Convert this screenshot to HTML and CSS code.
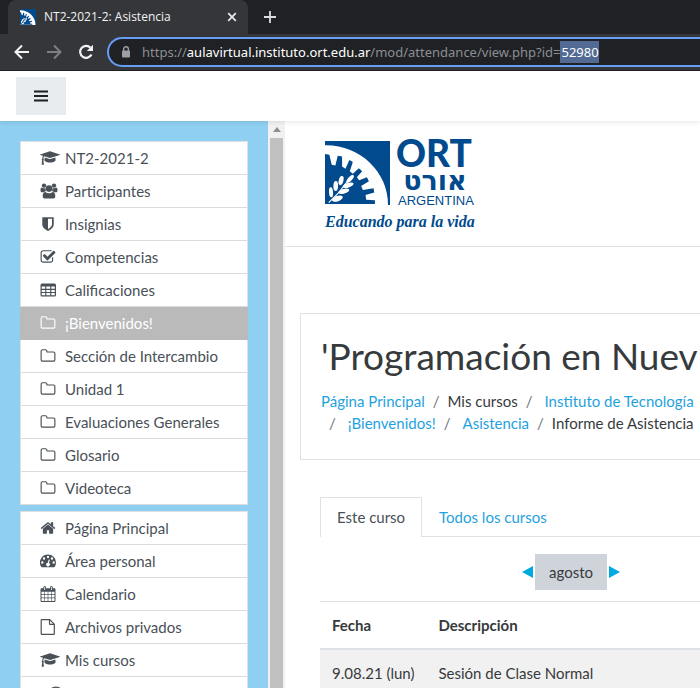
FILE: index.html
```html
<!DOCTYPE html>
<html lang="es">
<head>
<meta charset="utf-8">
<title>NT2-2021-2: Asistencia</title>
<link rel="stylesheet" href="styles.css">
</head>
<body>
<svg class="defs" aria-hidden="true">
  <symbol id="i-cap" viewBox="0 0 2304 1792"><path d="M1774 836l18 316q4 69-82 128t-235 93.500-323 34.500-323-34.500-235-93.500-82-128l18-316 574 181q22 7 48 7t48-7zm530-324q0 23-22 31l-1120 352q-4 1-10 1t-10-1l-652-206q-43 34-71 111.500t-34 178.500q63 36 63 109 0 69-58 107l58 433q2 14-8 25-9 11-24 11h-192q-15 0-24-11-10-11-8-25l58-433q-58-38-58-107 0-73 65-111 11-207 98-330l-333-104q-22-8-22-31t22-31l1120-352q4-1 10-1t10 1l1120 352q22 8 22 31z"/></symbol>
  <symbol id="i-users" viewBox="0 0 18 16"><circle cx="4" cy="2.600" r="2.200"/><circle cx="14" cy="2.600" r="2.200"/><path d="M.5 7.500C.5 5.300 1 4.600 1.700 4.600 2.500 5.400 4.600 5.600 5.400 5.100 5.300 6.500 5.700 7.500 6.400 8.300 5.200 8.300 4.400 8.700 3.900 9.300H2C1 9.300.5 8.500.5 7.500ZM17.500 7.500C17.500 5.300 17 4.600 16.300 4.600 15.500 5.400 13.400 5.600 12.600 5.100 12.700 6.500 12.300 7.500 11.600 8.300 12.800 8.300 13.600 8.700 14.100 9.300H16C17 9.300 17.500 8.500 17.500 7.500Z"/><circle cx="9" cy="5.600" r="3.300"/><path d="M2.700 13.200C2.700 10.700 3.400 8.900 5.400 8.900 6.300 9.700 7.600 10.200 9 10.200S11.700 9.700 12.600 8.900C14.600 8.900 15.300 10.700 15.300 13.200 15.300 14.800 14.300 15.600 12.900 15.600H5.100C3.700 15.600 2.700 14.800 2.700 13.200Z"/></symbol>
  <symbol id="i-shield" viewBox="0 0 1792 1792"><path d="M1344 960v-640h-448v1137q119-63 213-137 235-184 235-360zm192-768v768q0 86-33.500 170.500t-83 150-118 127.500-126.500 103-121 77.500-89.500 49.500-42.500 20q-12 6-26 6t-26-6q-16-7-42.500-20t-89.500-49.500-121-77.500-126.500-103-118-127.500-83-150-33.500-170.500v-768q0-26 19-45t45-19h1152q26 0 45 19t19 45z"/></symbol>
  <symbol id="i-check" viewBox="0 0 1792 1792"><path d="M1472 930v318q0 119-84.500 203.500t-203.500 84.500h-832q-119 0-203.500-84.500t-84.500-203.500v-832q0-119 84.500-203.500t203.500-84.500h832q63 0 117 25 15 7 18 23 3 17-9 29l-49 49q-10 10-23 10-3 0-9-2-23-6-45-6h-832q-66 0-113 47t-47 113v832q0 66 47 113t113 47h832q66 0 113-47t47-113v-254q0-13 9-22l64-64q10-10 23-10 6 0 12 3 20 8 20 29zm231-489l-814 814q-24 24-57 24t-57-24l-430-430q-24-24-24-57t24-57l110-110q24-24 57-24t57 24l263 263 647-647q24-24 57-24t57 24l110 110q24 24 24 57t-24 57z"/></symbol>
  <symbol id="i-table" viewBox="0 0 16 16"><path fill-rule="evenodd" d="M2 1.500H14.500Q16 1.500 16 3V13Q16 14.500 14.500 14.500H2Q.5 14.500.5 13V3Q.5 1.500 2 1.500ZM1.700 4.500V6.800H5.200V4.500ZM6.300 4.500V6.800H10.200V4.500ZM11.300 4.500V6.800H14.800V4.500ZM1.700 7.900V10H5.200V7.900ZM6.300 7.900V10H10.200V7.900ZM11.300 7.900V10H14.800V7.900ZM1.700 11.100V13.300H5.200V11.100ZM6.300 11.100V13.300H10.200V11.100ZM11.300 11.100V13.300H14.800V11.100Z"/></symbol>
  <symbol id="i-folder" viewBox="0 0 1792 1792"><path d="M1600 1312v-704q0-40-28-68t-68-28h-704q-40 0-68-28t-28-68v-64q0-40-28-68t-68-28h-320q-40 0-68 28t-28 68v960q0 40 28 68t68 28h1216q40 0 68-28t28-68zm128-704v704q0 92-66 158t-158 66h-1216q-92 0-158-66t-66-158v-960q0-92 66-158t158-66h320q92 0 158 66t66 158v32h672q92 0 158 66t66 158z"/></symbol>
  <symbol id="i-home" viewBox="0 0 1792 1792"><path d="M1472 992v480q0 26-19 45t-45 19h-384v-384h-256v384h-384q-26 0-45-19t-19-45v-480q0-1 .5-3t.5-3l575-474 575 474q1 2 1 6zm223-69l-62 74q-8 9-21 11h-3q-13 0-21-7l-692-577-692 577q-12 8-24 7-13-2-21-11l-62-74q-8-10-7-23.500t11-21.500l719-599q32-26 76-26t76 26l244 204v-195q0-14 9-23t23-9h192q14 0 23 9t9 23v408l219 182q10 8 11 21.500t-7 23.500z"/></symbol>
  <symbol id="i-gauge" viewBox="0 0 16 16"><path fill-rule="evenodd" d="M8 1.500A8 8 0 0 1 16 9.500C16 11 15.600 12.500 14.800 13.800Q14.600 14.200 14.100 14.200H1.900Q1.400 14.200 1.200 13.800A8 8 0 0 1 8 1.500ZM2.300 8.300a1.200 1.200 0 1 0 0 2.400 1.200 1.200 0 0 0 0-2.400ZM4 4.300a1.200 1.200 0 1 0 0 2.400 1.200 1.200 0 0 0 0-2.400ZM8 2.700a1.200 1.200 0 1 0 0 2.400 1.200 1.200 0 0 0 0-2.400ZM12 4.300a1.200 1.200 0 1 0 0 2.400 1.200 1.200 0 0 0 0-2.400ZM13.700 8.300a1.200 1.200 0 1 0 0 2.400 1.200 1.200 0 0 0 0-2.400ZM8.700 6.400 7.800 9.700A1.800 1.800 0 1 0 9 10l.9-3.300Z"/></symbol>
  <symbol id="i-calendar" viewBox="0 0 16 16"><path fill-rule="evenodd" d="M3.300 2.300V1.500Q3.300 0 4.700 0T6.100 1.500V2.300H10V1.500Q10 0 11.400 0T12.800 1.500V2.300H14.300Q15.500 2.300 15.500 3.500V14.800Q15.500 16 14.300 16H1.700Q.5 16 .5 14.800V3.500Q.5 2.300 1.700 2.300ZM4.300 1V4H5.100V1ZM11 1V4H11.800V1ZM1.500 5.700V8.300H4.300V5.700ZM4.900 5.700V8.300H7.700V5.700ZM8.300 5.700V8.300H11.100V5.700ZM11.700 5.700V8.300H14.500V5.700ZM1.500 8.900V11.600H4.300V8.900ZM4.900 8.900V11.600H7.700V8.900ZM8.300 8.900V11.600H11.100V8.900ZM11.700 8.900V11.600H14.500V8.900ZM1.500 12.200V15H4.300V12.200ZM4.900 12.200V15H7.700V12.200ZM8.300 12.200V15H11.100V12.200ZM11.700 12.200V15H14.500V12.200Z"/></symbol>
  <symbol id="i-file" viewBox="0 0 16 16"><path d="M1.200 1.300Q1.200.6 1.900.6H9.700L14.300 5.200V14.700Q14.300 15.400 13.600 15.400H1.900Q1.200 15.400 1.200 14.700ZM9.500.8V4.700Q9.500 5.400 10.200 5.400H14.200" fill="none" stroke="currentColor" stroke-width="1.200"/></symbol>
  <symbol id="i-emblem" viewBox="9 9 194 191">
    <path fill="#004a8d" d="M9 9H203V200H9Z"/>
    <path fill="#fff" d="M9 22C112 20 197 100 197 200H9Z"/>
    <path fill="#004a8d" d="M9 197V48L22 50 29 80 40 82 47 53 60 55 60 85 70 92 82 66 92 72 83 99 92 107 110 90 120 99 104 117 111 126 134 117 140 129 117 143 122 155 154 150 156 163 130 170 132 184 158 186V197Z"/>
    <g fill="#fff"><ellipse cx="84" cy="122" rx="6" ry="15" transform="rotate(42 84 122)"/><ellipse cx="57" cy="127" rx="7" ry="14" transform="rotate(14 57 127)"/><ellipse cx="41" cy="143" rx="7" ry="15" transform="rotate(2 41 143)"/><ellipse cx="27" cy="162" rx="6" ry="15" transform="rotate(-4 27 162)"/><ellipse cx="78" cy="141" rx="7" ry="17" transform="rotate(72 78 141)"/><ellipse cx="65" cy="159" rx="7" ry="17" transform="rotate(74 65 159)"/><ellipse cx="46" cy="181" rx="8" ry="17" transform="rotate(70 46 181)"/></g>
    <path d="M20 193 50 163 78 126" fill="none" stroke="#fff" stroke-width="3"/>
  </symbol>
</svg>

<header class="browser">
  <div class="tabstrip">
    <div class="tab">
      <svg class="favicon"><use href="#i-emblem"/></svg>
      <span class="tab-title">NT2-2021-2: Asistencia</span>
      <button class="chrome-btn close" aria-label="Cerrar pestaña"><svg width="10" height="10" viewBox="0 0 10 10"><path d="M1.200 1.200 8.800 8.800M8.800 1.200 1.200 8.800" stroke="#e8eaed" stroke-width="1.700"/></svg></button>
    </div>
    <button class="chrome-btn new-tab" aria-label="Nueva pestaña"><svg width="12" height="12" viewBox="0 0 12 12"><path d="M6 0V12M0 6H12" stroke="#dadce0" stroke-width="1.800"/></svg></button>
  </div>
  <div class="toolbar">
    <button class="chrome-btn" aria-label="Atrás"><svg width="16" height="16" viewBox="0 0 16 16"><path d="M15 8H2M8 1.500 1.500 8 8 14.500" fill="none" stroke="#f1f3f4" stroke-width="2"/></svg></button>
    <button class="chrome-btn" aria-label="Adelante"><svg width="16" height="16" viewBox="0 0 16 16"><path d="M1 8H14M8 1.500 14.500 8 8 14.500" fill="none" stroke="#7d7f82" stroke-width="2"/></svg></button>
    <button class="chrome-btn" aria-label="Recargar"><svg width="16" height="16" viewBox="0 0 16 16"><path d="M13.500 10.500A6 6 0 1 1 12.500 3.700" fill="none" stroke="#f1f3f4" stroke-width="2.200"/><path d="M15 .8V7H8.800Z" fill="#f1f3f4"/></svg></button>
    <div class="omnibox">
      <svg class="lock" width="10" height="12" viewBox="0 0 10 12"><path d="M2.600 5V3.200A2.400 2.400 0 0 1 7.400 3.200V5" fill="none" stroke="#9aa0a6" stroke-width="1.400"/><rect x="1" y="4.400" width="8" height="7.200" rx="1" fill="#9aa0a6"/></svg>
      <div class="url" role="textbox" tabindex="0" aria-label="Dirección">https://<b>aulavirtual.instituto.ort.edu.ar</b>/mod/attendance/view.php?id=<mark>52980</mark></div>
    </div>
  </div>
</header>

<div class="navbar">
  <button class="menu-btn" aria-label="Panel lateral"><svg width="14" height="12" viewBox="0 0 14 12"><path d="M0 1.500H14M0 6H14M0 10.500H14" stroke="#1d2125" stroke-width="2"/></svg></button>
</div>

<div class="layout">
  <nav class="drawer" aria-label="Navegación">
    <ul class="nav-list">
      <li><a href="#"><svg class="icon wide"><use href="#i-cap"/></svg>NT2-2021-2</a></li>
      <li><a href="#"><svg class="icon people"><use href="#i-users"/></svg>Participantes</a></li>
      <li><a href="#"><svg class="icon"><use href="#i-shield"/></svg>Insignias</a></li>
      <li><a href="#"><svg class="icon"><use href="#i-check"/></svg>Competencias</a></li>
      <li><a href="#"><svg class="icon"><use href="#i-table"/></svg>Calificaciones</a></li>
      <li><a href="#" class="active"><svg class="icon"><use href="#i-folder"/></svg>¡Bienvenidos!</a></li>
      <li><a href="#"><svg class="icon"><use href="#i-folder"/></svg>Sección de Intercambio</a></li>
      <li><a href="#"><svg class="icon"><use href="#i-folder"/></svg>Unidad 1</a></li>
      <li><a href="#"><svg class="icon"><use href="#i-folder"/></svg>Evaluaciones Generales</a></li>
      <li><a href="#"><svg class="icon"><use href="#i-folder"/></svg>Glosario</a></li>
      <li><a href="#"><svg class="icon"><use href="#i-folder"/></svg>Videoteca</a></li>
    </ul>
    <ul class="nav-list">
      <li><a href="#"><svg class="icon"><use href="#i-home"/></svg>Página Principal</a></li>
      <li><a href="#"><svg class="icon"><use href="#i-gauge"/></svg>Área personal</a></li>
      <li><a href="#"><svg class="icon"><use href="#i-calendar"/></svg>Calendario</a></li>
      <li><a href="#"><svg class="icon"><use href="#i-file"/></svg>Archivos privados</a></li>
      <li><a href="#"><svg class="icon wide"><use href="#i-cap"/></svg>Mis cursos</a></li>
      <li><a href="#" class="sub" aria-label="Curso"><svg class="icon"><use href="#i-gauge"/></svg></a></li>
    </ul>
  </nav>
  <div class="scrollbar"><svg width="8" height="5" viewBox="0 0 8 5"><path d="M0 5 4 0 8 5Z" fill="#8f8f8f"/></svg><div class="thumb"></div></div>

  <main class="content">
    <div class="brand">
      <svg class="logo" width="152" height="96" viewBox="0 0 152 96" role="img" aria-label="ORT Argentina">
        <use href="#i-emblem" x="2" y="3" width="65" height="64"/>
        <g fill="#004a8d">
          <text class="logo-ort" x="73" y="29">ORT</text>
          <text class="logo-hebrew" x="112" y="52" text-anchor="middle">אורט</text>
          <text class="logo-country" x="75" y="67">ARGENTINA</text>
          <text class="logo-motto" x="2" y="89">Educando para la vida</text>
        </g>
      </svg>
    </div>

    <section class="page-card">
      <h1>'Programación en Nuev</h1>
      <ol class="crumbs">
        <li><a href="#">Página Principal</a></li>
        <li>Mis cursos</li>
        <li class="gap"><a href="#">Instituto de Tecnología</a></li>
        <li class="break" aria-hidden="true"></li>
        <li class="gap"><a href="#">¡Bienvenidos!</a></li>
        <li class="gap"><a href="#">Asistencia</a></li>
        <li>Informe de Asistencia</li>
      </ol>
    </section>

    <section class="report">
      <div class="tabs">
        <a class="tab-link current" href="#">Este curso</a>
        <a class="tab-link" href="#">Todos los cursos</a>
      </div>
      <div class="month">
        <button class="arrow" aria-label="Mes anterior"><svg width="11" height="12" viewBox="0 0 11 12"><path d="M0 6 11 0V12Z" fill="#00a9e0"/></svg></button>
        <span class="month-name">agosto</span>
        <button class="arrow" aria-label="Mes siguiente"><svg width="11" height="12" viewBox="0 0 11 12"><path d="M11 6 0 0V12Z" fill="#00a9e0"/></svg></button>
      </div>
      <table class="sessions">
        <thead><tr><th class="date">Fecha</th><th>Descripción</th></tr></thead>
        <tbody><tr><td>9.08.21 (lun)</td><td>Sesión de Clase Normal</td></tr></tbody>
      </table>
    </section>
  </main>
</div>
</body>
</html>
```
FILE: styles.css
```css
* { box-sizing: border-box; }

body {
  margin: 0;
  height: 100vh;
  overflow: hidden;
  display: flex;
  flex-direction: column;
  background: #fff;
  color: #373a3c;
  font: 15px/22px Lato, sans-serif;
}

a { color: #1fa2de; text-decoration: none; }
button { border: 0; padding: 0; background: none; display: flex; align-items: center; justify-content: center; }
ul, ol { list-style: none; margin: 0; padding: 0; }
.defs { position: absolute; width: 0; height: 0; }

/* Browser frame */
.browser { flex: none; background: #35363a; border-bottom: 1px solid #202124; font-family: "Noto Sans", "Open Sans", sans-serif; }
.tabstrip { display: flex; height: 34px; padding-left: 8px; background: #202124; }
.tab {
  display: flex;
  align-items: center;
  width: 240px;
  padding: 0 10px 0 12px;
  background: #35363a;
  border-radius: 8px 8px 0 0;
}
.favicon { width: 16px; height: 16px; margin-right: 8px; }
.tab-title { flex: 1; color: #f1f3f4; font-family: "Open Sans", sans-serif; font-size: 12px; white-space: nowrap; }
.close { width: 12px; height: 16px; }
.new-tab { width: 44px; height: 34px; }
.toolbar { display: flex; align-items: center; height: 36px; padding-left: 14px; gap: 16px; }
.omnibox {
  flex: 1;
  display: flex;
  align-items: center;
  height: 30px;
  margin-left: -3px;
  padding-left: 12px;
  gap: 11px;
  border: 2px solid #669df6;
  border-right: 0;
  border-radius: 15px 0 0 15px;
  background: #202124;
}
.url { flex: 1; outline: 0; color: #8b8f94; font-size: 13px; line-height: 22px; white-space: nowrap; }
.url b { color: #fff; font-weight: 400; }
.url mark { display: inline-block; padding-left: 1px; background: #526a94; color: #fff; }

/* Site bar */
.navbar {
  flex: none;
  z-index: 1;
  display: flex;
  padding: 6px 16px;
  background: #fff;
  box-shadow: 0 2px 4px rgba(0, 0, 0, .08);
}
.menu-btn { width: 50px; height: 38px; background: #e9ecef; }

.layout { flex: 1; min-height: 0; display: flex; }

/* Navigation drawer */
.drawer { flex: none; width: 268px; padding: 20px; overflow: hidden; background: #8fcff1; }
.nav-list { border: 1px solid #dee0e2; border-bottom: 0; background: #fff; }
.nav-list + .nav-list { margin-top: 6px; }
.nav-list a {
  display: flex;
  align-items: center;
  height: 33px;
  padding-left: 19px;
  border-bottom: 1px solid #d9dbdd;
  color: #495057;
}
.nav-list .active { margin: 0 -1px; padding-left: 20px; background: #bababa; border-color: #bababa; color: #fff; }
.icon { width: 16px; height: 16px; margin-right: 9px; fill: currentColor; }
.icon.wide { width: 20px; margin-right: 5px; }
.icon.people { width: 18px; margin-right: 7px; }
.nav-list .sub { padding-left: 27px; }

.scrollbar { flex: none; display: flex; flex-direction: column; align-items: center; width: 17px; padding: 6px 2px 0; background: #f1f1f1; }
.thumb { flex: 1; width: 100%; margin-top: 6px; background: #c1c1c1; }

/* Course page */
.content { flex: 1; min-width: 0; overflow: hidden; }
.brand { padding: 17px 0 12px 38px; border-bottom: 1px solid #dee2e6; }
.logo { display: block; overflow: visible; }
.logo-ort { font: 900 37px Lato, sans-serif; }
.logo-hebrew { font: bold 27px "DejaVu Sans", sans-serif; }
.logo-country { font: 13px "Liberation Sans", sans-serif; }
.logo-motto { font: italic bold 16px "Liberation Serif", serif; }

.page-card {
  margin: 66px 0 37px 15px;
  padding: 20px 0 25px 20px;
  border: 1px solid #dee2e6;
  border-right: 0;
}
h1 { margin: 0 0 12px; font-size: 37px; line-height: 44px; font-weight: 400; white-space: nowrap; }
.crumbs { display: flex; flex-wrap: wrap; white-space: nowrap; }
.crumbs li + li::before { content: "/"; padding: 0 8px; color: #6c757d; }
.crumbs .gap a { margin-left: 4px; }
.crumbs .break { width: 100%; height: 0; overflow: hidden; }

.report { margin-left: 35px; }
.tabs { display: flex; border-bottom: 1px solid #dee2e6; }
.tab-link { padding: 8px 16px; border: 1px solid transparent; border-bottom: 0; }
.tab-link.current { margin-bottom: -1px; padding-bottom: 9px; border-color: #dee2e6; background: #fff; color: #495057; }
.month { display: flex; align-items: center; gap: 2px; padding: 17px 0 11px 202px; }
.month-name { padding: 7px 14px; background: #ced4da; }
.arrow { width: 11px; height: 36px; }
.sessions { width: 100%; border-collapse: collapse; text-align: left; }
.sessions th, .sessions td { padding: 12px; border-top: 1px solid #dee2e6; white-space: nowrap; }
.sessions th { border-bottom: 2px solid #dee2e6; font-weight: 700; }
.sessions .date { width: 106px; }
.sessions td { background: #f1f1f1; }
```
